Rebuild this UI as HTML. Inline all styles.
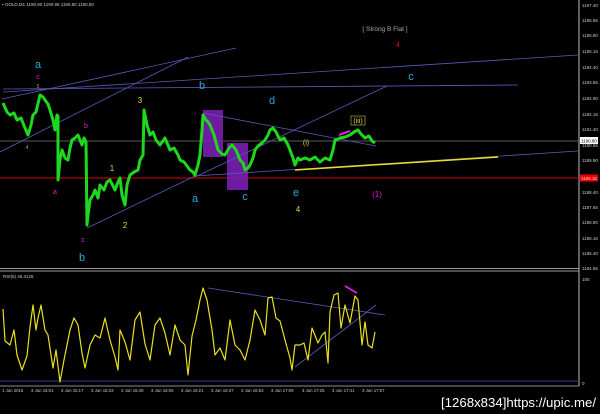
<!DOCTYPE html>
<html><head><meta charset="utf-8"><style>
html,body{margin:0;padding:0;background:#000;}
svg{display:block;font-family:"Liberation Sans",sans-serif;}
</style></head><body>
<svg width="600" height="414" viewBox="0 0 600 414" xmlns="http://www.w3.org/2000/svg">
<rect width="600" height="414" fill="#000"/>
<text x="2" y="6" font-size="4.5" fill="#ccc">▪ GOLD,M1  1190.80 1190.96 1190.80 1190.80</text>
<line x1="579" y1="0" x2="579" y2="386" stroke="#bbb" stroke-width="1"/>
<g font-size="4.5" fill="#ccc">
<text x="582" y="7">1197.40</text><text x="582" y="22">1196.65</text><text x="582" y="37">1195.90</text>
<text x="582" y="53">1195.15</text><text x="582" y="69">1194.40</text><text x="582" y="84">1193.65</text>
<text x="582" y="100">1192.90</text><text x="582" y="116">1192.15</text><text x="582" y="131">1191.40</text>
<text x="582" y="147">1190.65</text><text x="582" y="162">1189.90</text>
<text x="582" y="194">1188.40</text><text x="582" y="209">1187.65</text><text x="582" y="224">1186.90</text>
<text x="582" y="240">1186.15</text><text x="582" y="255">1185.40</text><text x="582" y="270">1184.65</text>
<text x="582" y="281">100</text><text x="582" y="385">0</text>
</g>
<rect x="580" y="137" width="18" height="7" fill="#fff"/>
<text x="581" y="142.5" font-size="4.5" fill="#000">1190.80</text>
<rect x="580" y="174.5" width="18" height="7" fill="#e00"/>
<text x="581" y="180" font-size="4.5" fill="#fcc">1189.15</text>
<line x1="0" y1="141" x2="579" y2="141" stroke="#777" stroke-width="0.8"/>
<line x1="0" y1="178" x2="579" y2="178" stroke="#d00" stroke-width="1"/>
<rect x="203" y="110" width="20" height="47" fill="#7a1fb0" opacity="0.9"/>
<rect x="227" y="143" width="21" height="47" fill="#7a1fb0" opacity="0.9"/>
<g stroke="#5a5ab8" stroke-width="0.8" fill="none">
<line x1="0" y1="152" x2="188" y2="57"/>
<line x1="2" y1="99" x2="236" y2="48"/>
<line x1="3" y1="92" x2="578" y2="55"/>
<line x1="3" y1="89" x2="518" y2="85"/>
<line x1="195" y1="177" x2="387" y2="86"/>
<line x1="203" y1="113" x2="376" y2="146"/>
<line x1="195" y1="176" x2="578" y2="151"/>
<line x1="87" y1="228" x2="195" y2="176"/>
</g>
<line x1="295" y1="170" x2="498" y2="157" stroke="#e6e020" stroke-width="1.5"/>
<polyline fill="none" stroke="#1ed81e" stroke-width="3" stroke-linejoin="round" points="3,103 7,112 10,115 14,113 17,120 21,118 25,128 28,135 31,125 33,115 36,112 40,95 43,97 45,100 48,104 50,110 53,120 55,130 57,115 58,116 58,180 60,160 62,150 65,158 68,160 70,148 72,140 75,138 78,135 80,140 82,145 84,138 86,142 87,225 88,215 90,200 93,195 95,190 98,198 100,185 104,190 107,182 110,180 113,186 115,190 118,182 120,178 122,195 125,205 127,185 130,175 134,172 138,170 140,160 143,155 144,110 147,125 150,135 153,132 156,140 160,145 165,138 170,150 174,148 178,155 180,160 184,162 187,166 190,170 193,172 195,175 198,165 200,155 202,130 203,115 206,120 208,122 210,125 214,135 218,150 222,154 225,155 229,148 232,145 236,150 240,160 243,163 245,170 248,168 250,165 253,158 255,150 258,146 262,143 265,140 268,135 270,130 273,128 276,132 280,140 284,138 288,145 290,150 293,158 295,165 298,158 300,160 305,158 310,160 315,157 320,162 325,158 330,160 333,150 335,140 338,139 340,138 345,137 350,135 354,132 358,130 361,134 365,138 369,136 372,141 375,143"/>
<g font-size="11" text-anchor="middle">
<text x="38" y="68" fill="#29a8d8">a</text>
<text x="202" y="89" fill="#29a8d8">b</text>
<text x="272" y="104" fill="#29a8d8">d</text>
<text x="411" y="80" fill="#29a8d8">c</text>
<text x="195" y="202" fill="#29a8d8">a</text>
<text x="245" y="200" fill="#29a8d8">c</text>
<text x="296" y="196" fill="#29a8d8">e</text>
<text x="82" y="261" fill="#29a8d8">b</text>
</g>
<g font-size="7" text-anchor="middle" fill="#e020d0">
<text x="38" y="79">c</text>
<text x="86" y="128">b</text>
<text x="55" y="194">a</text>
<text x="83" y="242">c</text>
<text x="377" y="197" font-size="8">(1)</text>
</g>
<g font-size="8" text-anchor="middle" fill="#e8d830">
<text x="140" y="103">3</text>
<text x="112" y="171">1</text>
<text x="125" y="228">2</text>
<text x="298" y="212">4</text>
<text x="306" y="145" font-size="7">(i)</text>
<text x="358" y="123" font-size="7">(iii)</text>
</g>
<rect x="351" y="116" width="14" height="9" fill="none" stroke="#c8c040" stroke-width="0.6"/>
<text x="38" y="88" font-size="5" fill="#c0a030" text-anchor="middle">5</text>
<text x="27" y="149" font-size="5" fill="#c0a030" text-anchor="middle">4</text>
<text x="398" y="47" font-size="7" fill="#e01010" text-anchor="middle">4</text>
<text x="385" y="31" font-size="6.5" fill="#aaa" text-anchor="middle">[ Strong B Flat ]</text>
<line x1="339" y1="135" x2="350" y2="131" stroke="#e020e0" stroke-width="2"/>
<line x1="0" y1="268.5" x2="579" y2="268.5" stroke="#999" stroke-width="1"/>
<line x1="0" y1="271" x2="579" y2="271" stroke="#999" stroke-width="1"/>
<text x="3" y="278" font-size="4.5" fill="#ccc">RSI(5) 46.3125</text>
<line x1="0" y1="381" x2="579" y2="381" stroke="#3a3a8a" stroke-width="1"/>
<line x1="208" y1="288" x2="385" y2="315" stroke="#5a5ab8" stroke-width="0.8"/>
<line x1="295" y1="367" x2="376" y2="305" stroke="#5a5ab8" stroke-width="0.8"/>
<line x1="345" y1="286" x2="357" y2="293" stroke="#e020e0" stroke-width="1.8"/>
<polyline fill="none" stroke="#e8e020" stroke-width="1.2" stroke-linejoin="round" points="3,309 5,341 10,345 14,330 17,355 22,370 27,356 30,327 33,305 36,330 38,318 41,305 45,330 48,335 53,368 56,350 60,382 64,360 70,330 74,318 78,325 82,353 85,368 90,345 95,335 100,338 105,318 110,340 115,357 118,370 120,330 125,342 130,360 135,320 140,312 145,344 150,360 155,325 160,318 165,333 170,355 175,325 180,340 185,345 188,375 192,336 196,320 200,300 203,288 207,300 212,330 215,355 220,348 225,360 230,320 235,345 240,350 245,360 250,340 255,310 260,320 265,335 268,298 272,297 276,318 280,321 285,340 290,358 292,370 295,345 300,345 304,343 308,360 312,328 318,343 322,335 325,332 328,363 330,312 334,295 338,293 341,328 345,305 350,323 355,296 358,300 362,345 365,322 368,345 372,348 375,332"/>
<line x1="0" y1="386" x2="579" y2="386" stroke="#bbb" stroke-width="0.8"/>
<g font-size="4.3" fill="#ccc">
<text x="2" y="392">1 Jun 2015</text><text x="31" y="392">3 Jun 15:01</text><text x="61" y="392">3 Jun 15:17</text>
<text x="91" y="392">3 Jun 15:33</text><text x="121" y="392">3 Jun 15:49</text><text x="151" y="392">3 Jun 16:05</text>
<text x="181" y="392">3 Jun 16:21</text><text x="211" y="392">3 Jun 16:37</text><text x="241" y="392">3 Jun 16:53</text>
<text x="271" y="392">3 Jun 17:09</text><text x="302" y="392">3 Jun 17:25</text><text x="332" y="392">3 Jun 17:41</text>
<text x="362" y="392">3 Jun 17:57</text>
</g>
<text x="441" y="407" font-size="13" fill="#fff" textLength="155" lengthAdjust="spacingAndGlyphs">[1268x834]https://upic.me/</text>
</svg>
</body></html>
